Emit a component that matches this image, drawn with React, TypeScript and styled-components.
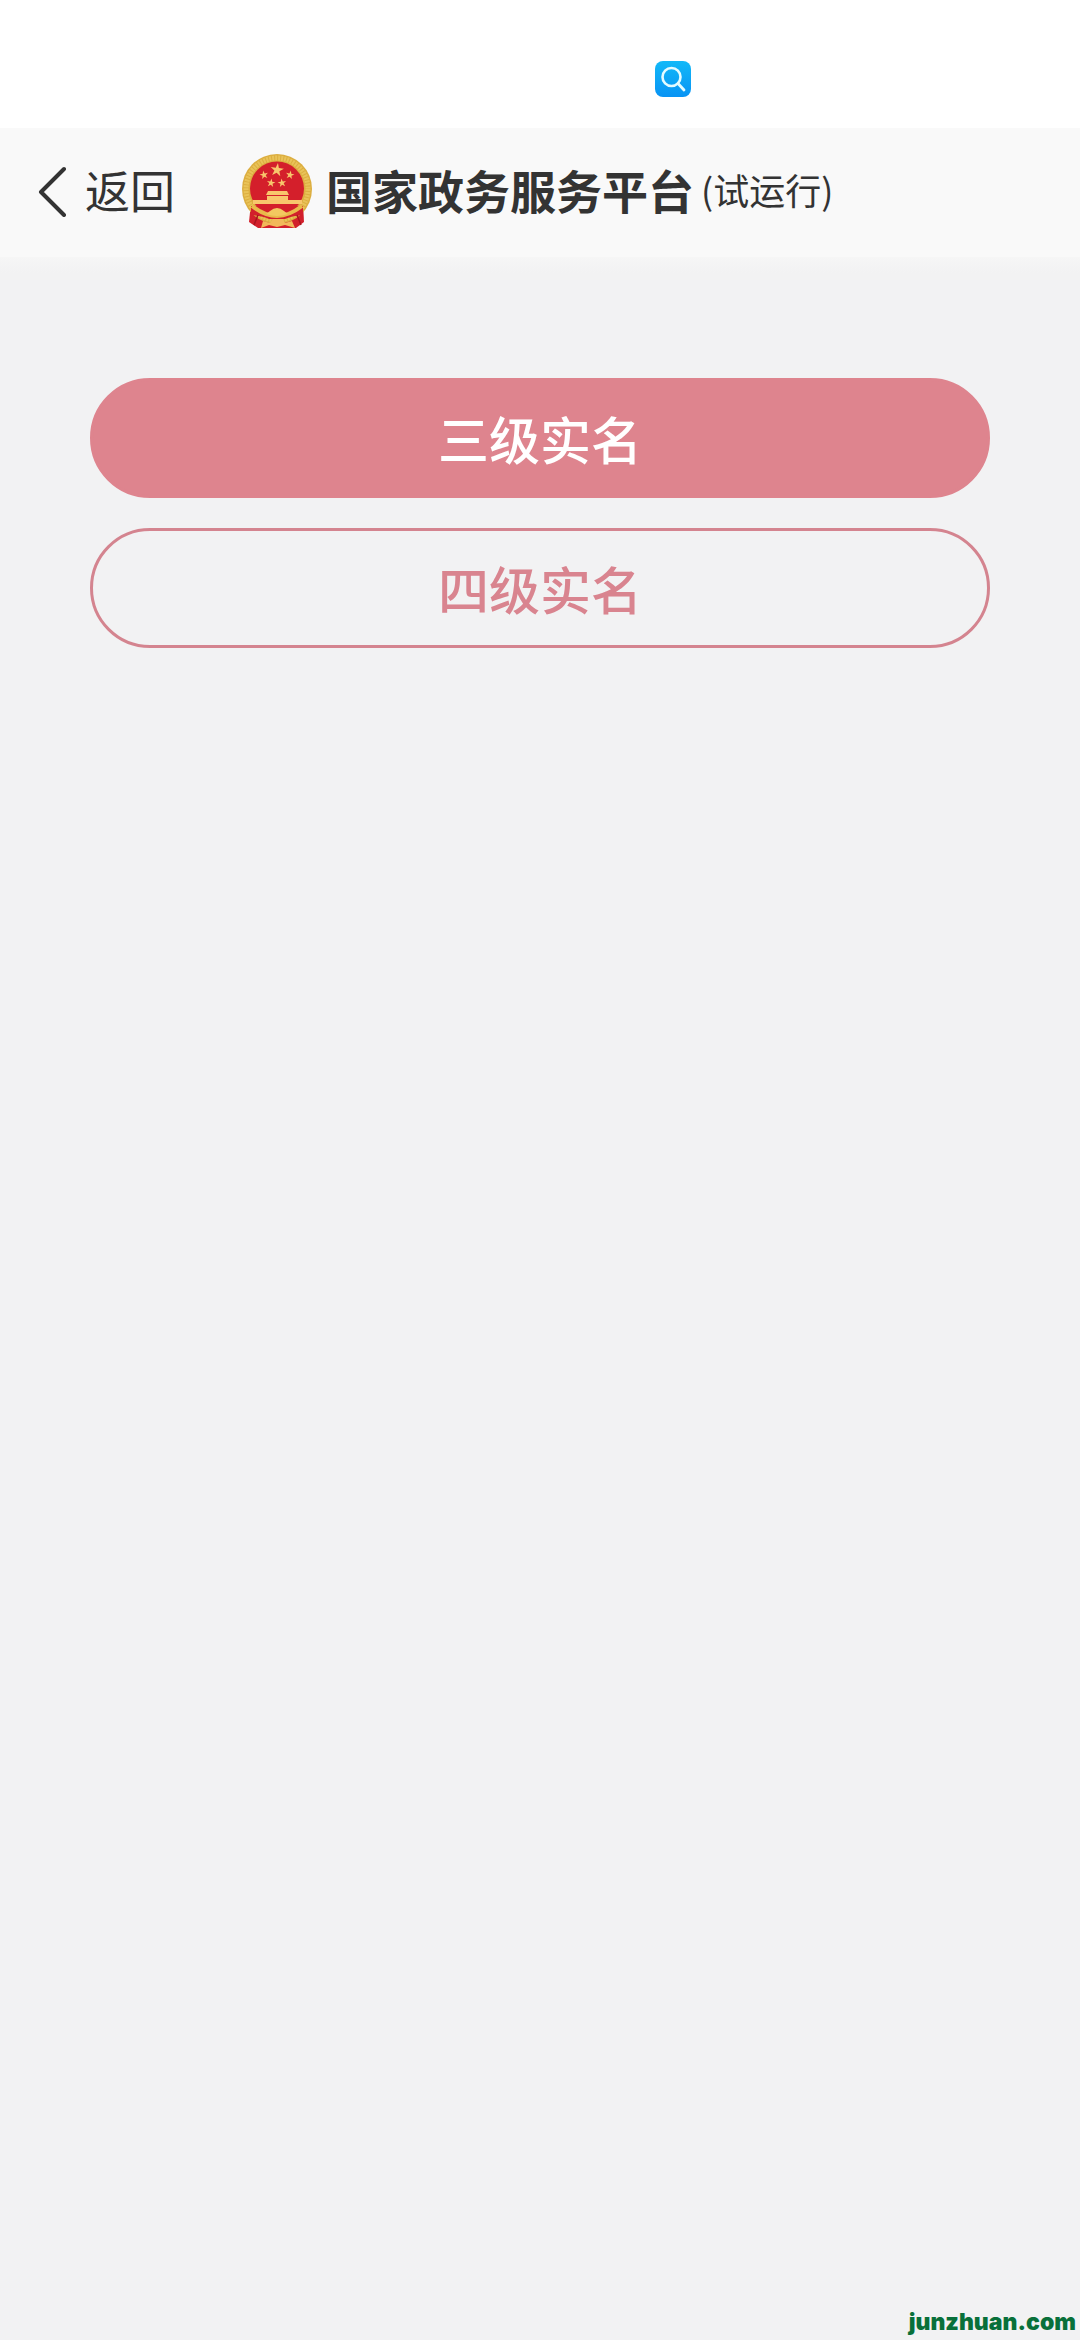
import React from "react";
import styled, { createGlobalStyle, css } from "styled-components";

const GlobalStyle = createGlobalStyle`
  *, *::before, *::after { box-sizing: border-box; }
  body {
    margin: 0;
    background: #f2f2f3;
    font-family: "Noto Sans CJK SC", "Noto Sans", sans-serif;
    color: #333333;
  }
`;

const Page = styled.div`
  display: flex;
  flex-direction: column;
  min-height: 100vh;
`;

const StatusBar = styled.div`
  display: flex;
  align-items: flex-end;
  height: 128px;
  padding: 0 60px 31px 655px;
  background: #ffffff;
`;

const Header = styled.header`
  display: flex;
  align-items: center;
  height: 129px;
  padding: 0 36px 4px;
  background: #f9f9f9;
`;

const HeaderShade = styled.div`
  height: 16px;
  background: linear-gradient(#f6f6f6, #f2f2f3);
`;

const BackButton = styled.button`
  display: flex;
  align-items: center;
  gap: 16px;
  padding: 0;
  border: 0;
  background: none;
  color: inherit;
  font: inherit;
  font-size: 45px;
  line-height: 64px;
  cursor: pointer;
`;

const BackLabel = styled.span`
  padding-bottom: 2px;
`;

const Brand = styled.div`
  display: flex;
  align-items: center;
  gap: 13px;
  margin-left: 66px;
  white-space: nowrap;
`;

const Title = styled.h1`
  margin: 0;
  padding-bottom: 4px;
  font-size: 46px;
  line-height: 64px;
  font-weight: 700;
`;

const Note = styled.span`
  margin-left: -6px;
  padding-bottom: 4px;
  font-size: 36px;
  line-height: 64px;
`;

const Actions = styled.main`
  display: flex;
  flex-direction: column;
  gap: 30px;
  padding: 105px 90px 60px;
`;

const PillButton = styled.button<{ $filled?: boolean }>`
  height: 120px;
  padding: 0;
  border: 3px solid #d4848f;
  border-radius: 60px;
  background: transparent;
  color: #d9848f;
  font: inherit;
  font-size: 51px;
  font-weight: 500;
  line-height: 72px;
  cursor: pointer;
  ${({ $filled }) =>
    $filled &&
    css`
      border-color: #de848e;
      background: #de848e;
      color: #ffffff;
    `}
`;

const Footer = styled.footer`
  margin-top: auto;
  padding: 0 4px 4px;
  text-align: right;
  font-family: Inter, sans-serif;
  font-size: 23px;
  font-weight: 900;
  line-height: 28px;
  color: #08703a;
`;

const SearchBadge = () => (
  <svg width="36" height="36" viewBox="0 0 36 36" role="img" aria-label="搜索">
    <defs>
      <linearGradient id="badge" x1="0" y1="0" x2="0" y2="1">
        <stop offset="0" stopColor="#12b9f8" />
        <stop offset="1" stopColor="#0893f4" />
      </linearGradient>
    </defs>
    <rect width="36" height="36" rx="8" fill="url(#badge)" />
    <circle cx="16.5" cy="16" r="9" fill="none" stroke="#e4fbff" strokeWidth="2.6" />
    <path d="M23 22.5 L29 29" stroke="#e4fbff" strokeWidth="2.8" strokeLinecap="round" />
  </svg>
);

const Chevron = () => (
  <svg width="33" height="52" viewBox="0 0 33 52" aria-hidden="true">
    <path d="M28 4 L5 27 L28 50" fill="none" stroke="#333" strokeWidth="4" strokeLinecap="round" strokeLinejoin="round" />
  </svg>
);

const star = (cx: number, cy: number, r: number, turn = 0) =>
  Array.from({ length: 10 }, (_, i) => {
    const a = ((i * 36 + turn - 90) * Math.PI) / 180;
    const d = i % 2 ? r * 0.38 : r;
    return `${cx + d * Math.cos(a)},${cy + d * Math.sin(a)}`;
  }).join(" ");

const Emblem = () => (
  <svg width="72" height="76" viewBox="0 0 72 76" role="img" aria-label="国徽">
    <path d="M10 50 L8 69 L17 75 H55 L63 69 L62 50 Z" fill="#d2202b" />
    <circle cx="36" cy="36" r="35" fill="#dcae40" />
    <circle cx="36" cy="36" r="31" fill="none" stroke="#e9c358" strokeWidth="5" strokeDasharray="2 1" />
    <circle cx="36" cy="35.5" r="27" fill="#d41f2b" />
    <g fill="#f8c66c">
      <polygon points={star(36, 17, 7, 8)} />
      <polygon points={star(23, 22, 4.5, -12)} />
      <polygon points={star(49, 22, 4.5, 12)} />
      <polygon points={star(30, 30, 4.5, 8)} />
      <polygon points={star(41, 30, 4.5, -8)} />
      <path d="M27 38 H46 L48 42 H25 Z" />
      <path d="M26 43 H47 V47 H61 V51 H12 V47 H26 Z" />
    </g>
    <path d="M10 53 Q21 51 30 61 Q36 65 42 61 Q51 51 62 53 V62 Q50 63 44 66 H28 Q22 63 10 62 Z" fill="#d2202b" />
    <path d="M11 53 Q24 63 36 63 Q48 63 61 53" fill="none" stroke="#e9b94a" strokeWidth="4" />
    <path d="M29 58 Q36 52 43 58 L47 61 Q36 65 25 61 Z" fill="#f3c860" />
    <path d="M20 75 L22 68 L29 70 L32 66 H41 L44 70 L51 68 L54 75 L44 72 L36 74 L28 72 Z" fill="#f2b95a" />
    <path d="M17 62 L13 72 M56 62 L60 72" stroke="#a9141f" strokeWidth="1.5" />
  </svg>
);

export default function App() {
  return (
    <Page>
      <GlobalStyle />
      <StatusBar>
        <SearchBadge />
      </StatusBar>
      <Header>
        <BackButton type="button">
          <Chevron />
          <BackLabel>返回</BackLabel>
        </BackButton>
        <Brand>
          <Emblem />
          <Title>国家政务服务平台</Title>
          <Note>(试运行)</Note>
        </Brand>
      </Header>
      <HeaderShade />
      <Actions>
        <PillButton type="button" $filled>
          三级实名
        </PillButton>
        <PillButton type="button">四级实名</PillButton>
      </Actions>
      <Footer>junzhuan.com</Footer>
    </Page>
  );
}
